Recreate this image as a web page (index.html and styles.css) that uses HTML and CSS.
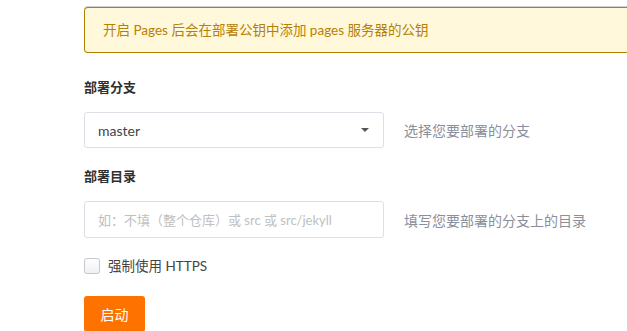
FILE: index.html
```html
<!DOCTYPE html>
<html lang="zh-CN">
<head>
    <meta charset="UTF-8">
    <title>Gitee Pages</title>
    <link rel="stylesheet" href="styles.css">
</head>
<body>
    <div class="pages-settings">
        <div class="notice">开启 Pages 后会在部署公钥中添加 pages 服务器的公钥</div>

        <form class="pages-form">
            <div class="field">
                <label class="field-label">部署分支</label>
                <div class="field-row">
                    <div class="dropdown">
                        <span class="dropdown-text">master</span>
                        <span class="dropdown-icon"></span>
                    </div>
                    <span class="field-help">选择您要部署的分支</span>
                </div>
            </div>

            <div class="field">
                <label class="field-label" for="dir">部署目录</label>
                <div class="field-row">
                    <input class="text-input" id="dir" type="text" placeholder="如：不填（整个仓库）或 src 或 src/jekyll">
                    <span class="field-help">填写您要部署的分支上的目录</span>
                </div>
            </div>

            <label class="checkbox">
                <input type="checkbox">
                <span class="checkbox-box"></span>
                <span>强制使用 HTTPS</span>
            </label>

            <button type="button" class="start-btn">启动</button>
        </form>
    </div>
</body>
</html>
```

FILE: styles.css
```css
* {
    margin: 0;
    padding: 0;
    box-sizing: border-box;
}

html, body {
    overflow: hidden;
}

body {
    font-family: "Microsoft YaHei", Lato, "Noto Sans CJK SC", sans-serif;
    font-size: 14px;
    color: #333;
    background: #fff;
}

.pages-settings {
    width: 800px;
    padding: 7px 0 0 84px;
}

.notice {
    width: 620px;
    height: 46px;
    padding: 13px 19px;
    font-size: 13.5px;
    line-height: 20px;
    background: #fff8db;
    color: #b58105;
    border-radius: 4px;
    box-shadow: 0 0 0 1px #b58105 inset, 0 -1px 0 0 rgba(34, 36, 38, 0.22);
}

.pages-form {
    padding-top: 24px;
}

.field {
    margin-bottom: 18px;
}

.field-label {
    display: block;
    font-size: 13px;
    font-weight: bold;
    line-height: 20px;
    color: #303030;
    margin-bottom: 15px;
}

.field-row {
    display: flex;
    align-items: center;
    gap: 20px;
}

.dropdown {
    width: 300px;
    height: 36px;
    border: 1px solid #dcdfe6;
    border-radius: 3px;
    padding: 0 13px 0 13px;
    display: flex;
    align-items: center;
    justify-content: space-between;
}

.dropdown-text {
    color: #444;
}

.dropdown-icon {
    width: 0;
    height: 0;
    border-left: 4px solid transparent;
    border-right: 4px solid transparent;
    border-top: 4px solid #555;
    margin-right: 1px;
}

.text-input {
    width: 300px;
    height: 37px;
    border: 1px solid #dcdfe6;
    border-radius: 3px;
    padding: 0 13px;
    font: inherit;
    font-size: 13px;
    color: #333;
    outline: none;
}

.text-input::placeholder {
    color: #c0c0c0;
}

.field-help {
    color: #8a8f9c;
}

.checkbox {
    display: flex;
    align-items: center;
    gap: 8px;
    height: 20px;
    line-height: 20px;
    font-size: 13.5px;
    color: #444;
}

.checkbox input {
    display: none;
}

.checkbox-box {
    width: 16px;
    height: 16px;
    border: 1px solid #c8c8c8;
    border-radius: 3px;
    background: linear-gradient(#fff, #eef0f3);
}

.start-btn {
    display: block;
    margin-top: 20px;
    width: 61px;
    height: 36px;
    border: none;
    border-radius: 3px;
    background: #fe7300;
    color: #fff;
    font: inherit;
    cursor: pointer;
}
```
